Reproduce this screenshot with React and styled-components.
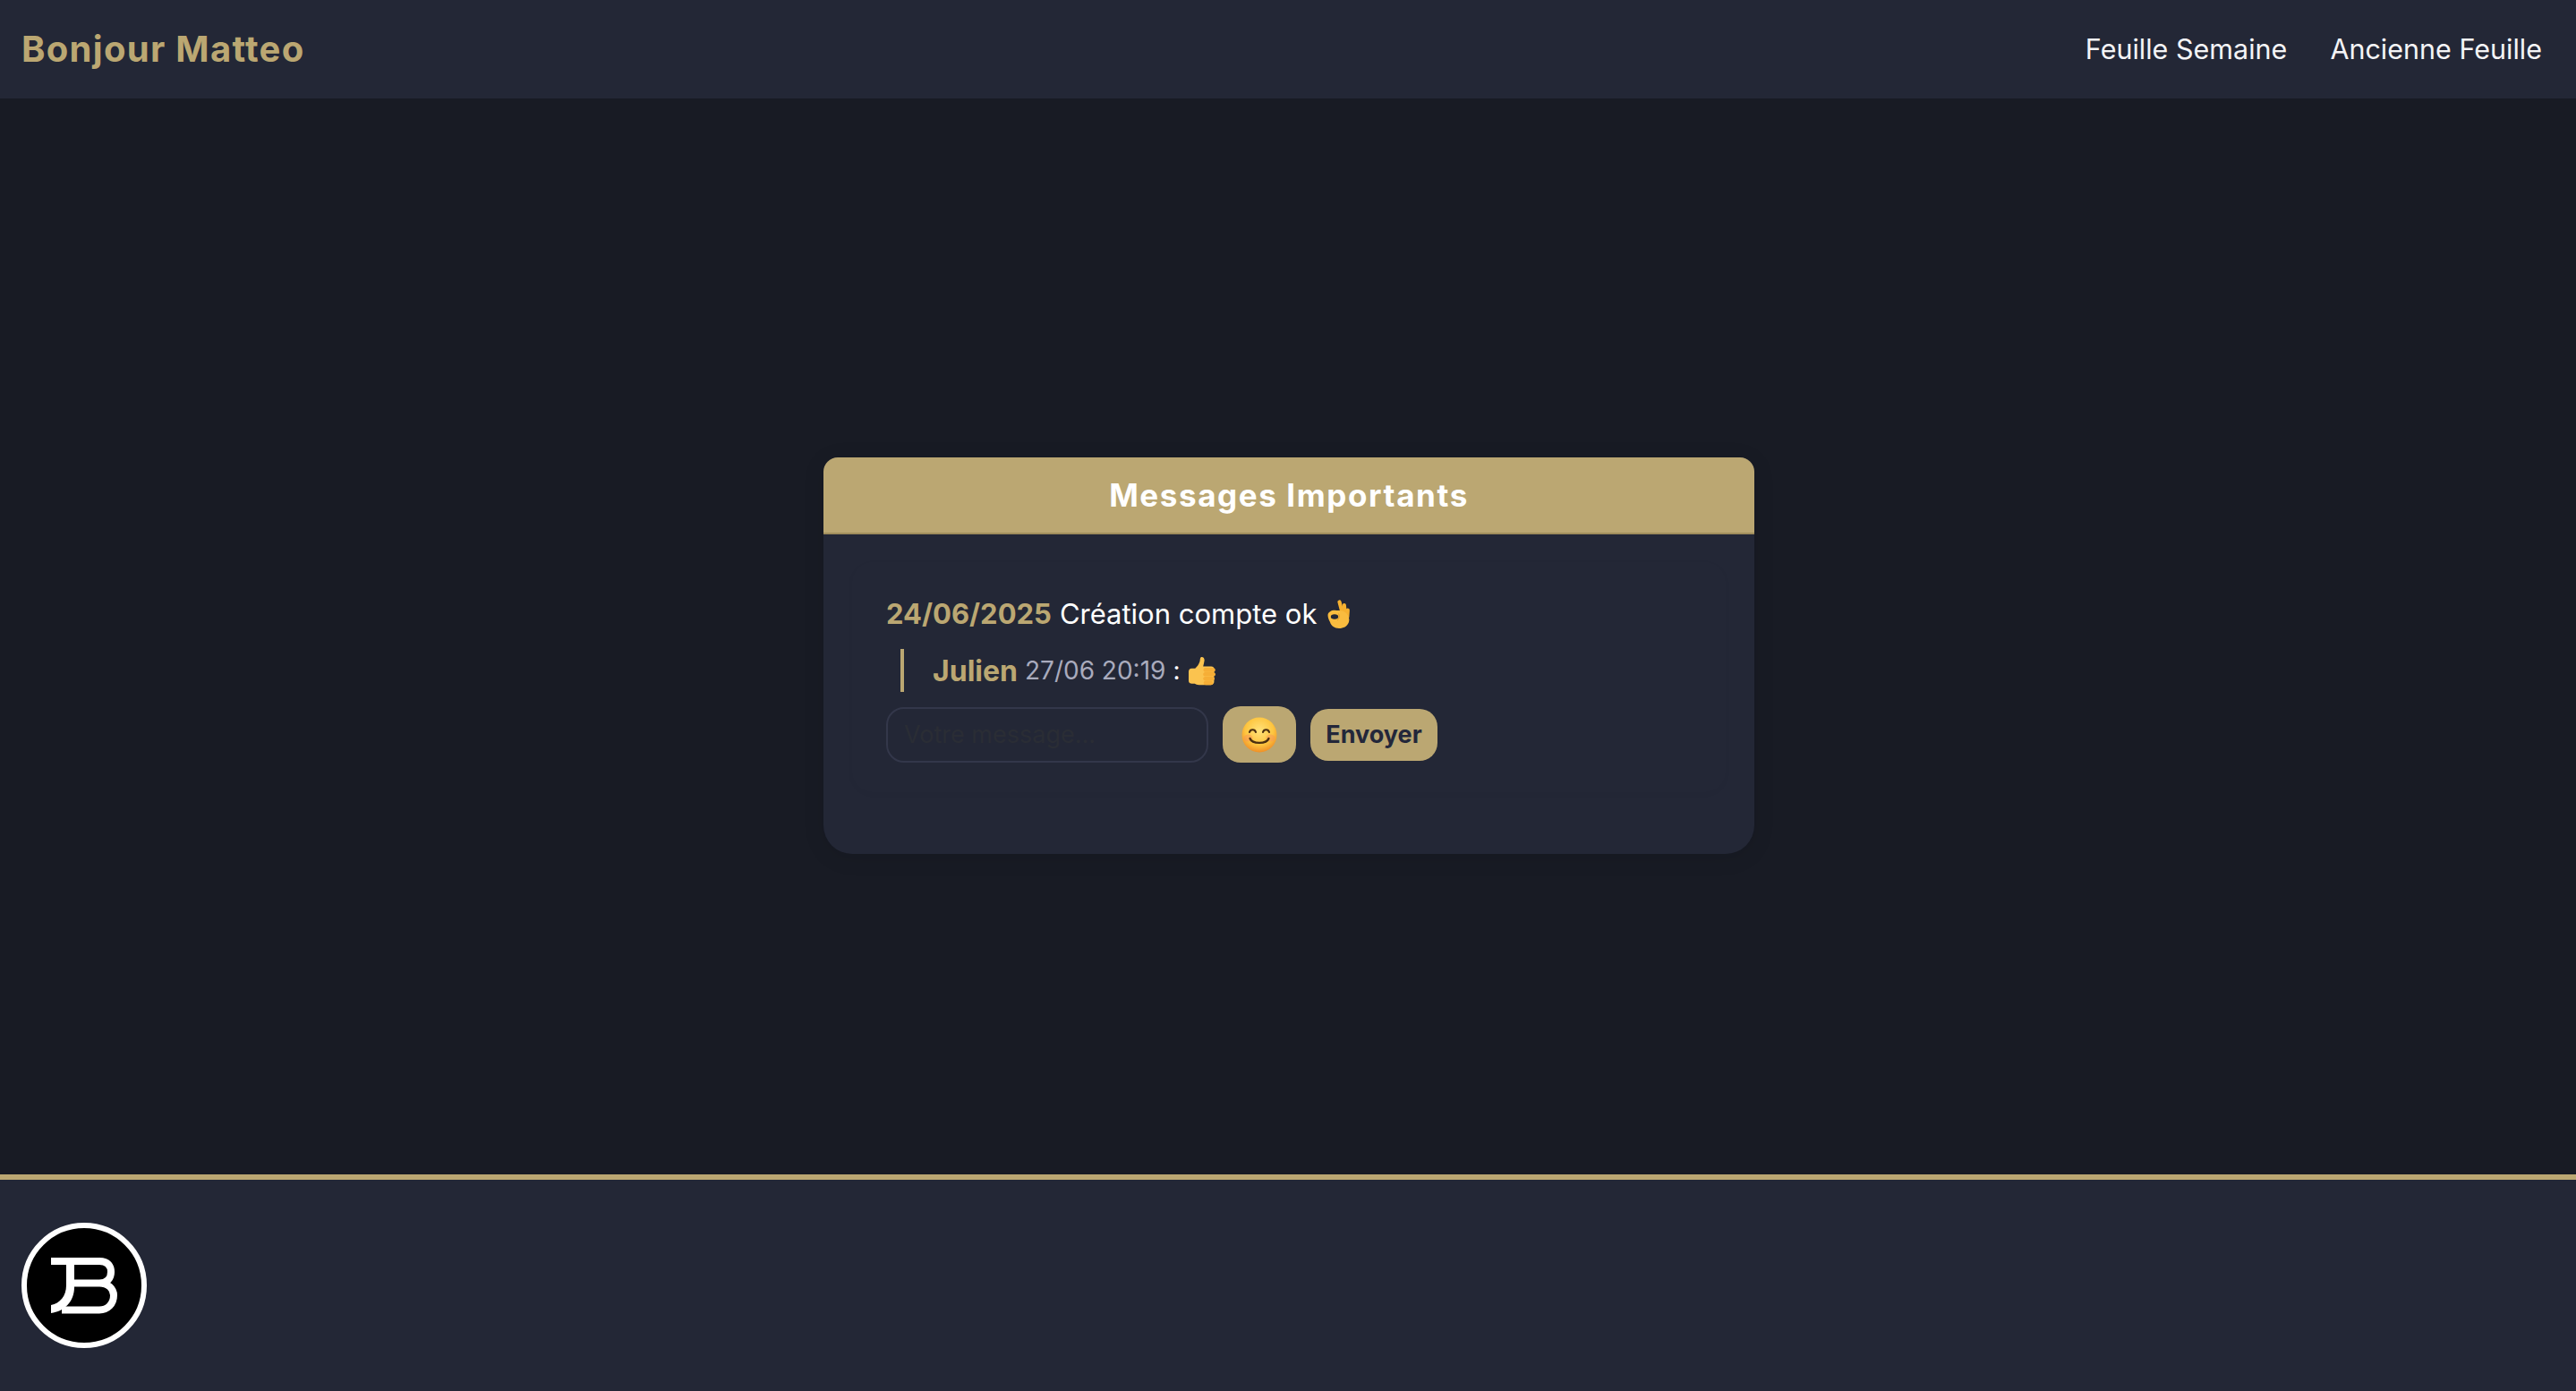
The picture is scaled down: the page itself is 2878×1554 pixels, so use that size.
import styled, { createGlobalStyle } from "styled-components";

const Global = createGlobalStyle`
  * { box-sizing: border-box; }
  html, body { margin: 0; padding: 0; }
  body {
    background: #181b24;
    font-family: Inter, "Noto Sans", sans-serif;
    color: #fff;
  }
`;

const OkEmoji = () => (
  <OkSvg viewBox="8 5 26 32" width="26" height="32">
    <g stroke="#f6b130" strokeWidth="4.200" strokeLinecap="round">
      <path d="M21.500 7.500L24.500 19" />
      <path d="M26.800 11L27.800 21" />
      <path d="M30.800 16.500L30.300 24" />
    </g>
    <path
      d="M8.500 22C9 18 14 16 18 17C22 17 26 17 29 20C32 23 33 27 32 30C30 35 26 37 21 37C16 37 12 34 11 30C9.500 27 8.500 25 8.500 22Z"
      fill="#f9bc3f"
    />
    <ellipse cx="16" cy="24" rx="4.200" ry="2.800" fill="#232736" />
    <path d="M20.500 20.500C22 23 21.500 26 19 28" stroke="#e09a2a" strokeWidth="1" fill="none" />
  </OkSvg>
);

const ThumbEmoji = () => (
  <EmojiSvg viewBox="0 0 32 33" width="32" height="33">
    <path
      d="M15 1c2.400-.6 3.800 1.400 3.600 4-.2 2.200-1 4.400-1.400 6.500h9c2 0 3.200 1.100 3.200 2.700v14.500c0 2.200-1.700 3.500-3.800 3.500H12.500c-2.200 0-3.400-.8-4.700-1.500H4.500C2 30.700 1 29.500 1 27v-9.500c0-2.400 1.200-3.800 3.500-3.800h3.800c2.300-2 4.300-4.700 5.200-8C13.800 3.900 13.800 1.400 15 1z"
      fill="#fbc34f"
    />
    <path
      d="M19.500 13h8.500c1.500 0 2.800 1 2.800 2.400s-1.300 2.400-2.800 2.400h-8c-1.400 0-2.500-1-2.500-2.400s.9-2.400 2-2.400zM19.500 18h9c1.400 0 2.500 1 2.500 2.300s-1.100 2.300-2.500 2.300h-9c-1.300 0-2.300-1-2.300-2.300s1-2.300 2.300-2.300zM19.500 23h8c1.400 0 2.500 1 2.500 2.200s-1.100 2.200-2.500 2.200h-8c-1.300 0-2.300-1-2.300-2.200s1-2.200 2.300-2.200zM20 27.800h6c1.300 0 2.300.9 2.300 2.200s-1 2.300-2.300 2.300h-6c-1.300 0-2.300-1-2.300-2.300s1-2.200 2.300-2.200z"
      fill="#f6ae36"
    />
  </EmojiSvg>
);

const SmileEmoji = () => (
  <EmojiSvg viewBox="0 0 40 40" width="40" height="40">
    <defs>
      <radialGradient id="smileFace" cx="50%" cy="38%" r="62%">
        <stop offset="0%" stopColor="#ffe27a" />
        <stop offset="65%" stopColor="#fdc53f" />
        <stop offset="100%" stopColor="#ef8f26" />
      </radialGradient>
    </defs>
    <circle cx="20" cy="20" r="19.500" fill="url(#smileFace)" />
    <ellipse cx="7.500" cy="23.500" rx="5" ry="4" fill="#f78f5b" opacity=".45" />
    <ellipse cx="32.500" cy="23.500" rx="5" ry="4" fill="#f78f5b" opacity=".45" />
    <path d="M9 17c1-3.600 6-3.600 7 0M24 17c1-3.600 6-3.600 7 0" stroke="#4a2f10" strokeWidth="2.100" fill="none" strokeLinecap="round" />
    <path d="M9.500 24c2.500 6.500 18.500 6.500 21 0" stroke="#4a2f10" strokeWidth="2.300" fill="none" strokeLinecap="round" />
  </EmojiSvg>
);

const Logo = () => (
  <LogoSvg viewBox="0 0 140 140" width="140" height="140">
    <circle cx="70" cy="70" r="67" fill="#000" stroke="#fff" strokeWidth="6" />
    <path d="M33 39H59V72C59 88 48 99 33 101V92C43 90 50 82 50 70V47H33Z" fill="#fff" />
    <path
      d="M59 43H87C97 43 100 49 100 55C100 62 96 67.500 87 67.500H59M87 67.500C97 67.500 103 74 103 81C103 91 96 97.500 87 97.500H45"
      stroke="#fff"
      strokeWidth="8"
      fill="none"
    />
  </LogoSvg>
);

const App = () => {
  return (
    <Page>
      <Global />
      <Header>
        <Hello>Bonjour Matteo</Hello>
        <Nav>
          <NavLink>Feuille Semaine</NavLink>
          <NavLink>Ancienne Feuille</NavLink>
        </Nav>
      </Header>
      <Main>
        <Card>
          <CardTitle>Messages Importants</CardTitle>
          <CardBody>
            <Message>
              <Line>
                <DateText>24/06/2025</DateText> Création compte ok <OkEmoji />
              </Line>
              <Reply>
                <Author>Julien</Author> <Time>27/06 20:19</Time> : <ThumbEmoji />
              </Reply>
              <ReplyForm>
                <ReplyInput placeholder="Votre message..." />
                <EmojiButton>
                  <SmileEmoji />
                </EmojiButton>
                <SendButton>Envoyer</SendButton>
              </ReplyForm>
            </Message>
          </CardBody>
        </Card>
      </Main>
      <Footer>
        <Logo />
      </Footer>
    </Page>
  );
};

const Page = styled.div`
  min-height: 1554px;
  display: grid;
  grid-template-rows: 110px 1202px 242px;
`;

const Header = styled.header`
  background: #232736;
  display: flex;
  align-items: center;
  justify-content: space-between;
  padding: 0 38px 2px 24px;
`;

const Hello = styled.div`
  color: #bba772;
  font-size: 40px;
  font-weight: 700;
  letter-spacing: 1.3px;
`;

const Nav = styled.nav`
  display: flex;
  gap: 48px;
`;

const NavLink = styled.a`
  color: #f4f4f6;
  font-size: 30.5px;
  font-weight: 400;
`;

const Main = styled.main`
  display: flex;
  justify-content: center;
  align-items: flex-start;
  padding: 401px 0 0 2px;
`;

const Card = styled.section`
  width: 1040px;
  height: 443px;
  background: #232736;
  border-radius: 16px 16px 32px 32px;
  overflow: hidden;
  box-shadow: 0 4px 24px rgba(0, 0, 0, 0.1);
`;

const CardTitle = styled.h2`
  margin: 0;
  height: 86px;
  background: #bba772;
  border-bottom: 2px solid #a08d5c;
  color: #fff;
  font-size: 35px;
  font-weight: 700;
  letter-spacing: 1.6px;
  display: flex;
  align-items: center;
  justify-content: center;
`;

const CardBody = styled.div`
  padding: 31px 32px;
`;

const Message = styled.article`
  height: 257px;
  padding: 38px 38px 0;
  border-radius: 24px;
  box-shadow: 0 2px 8px rgba(0, 0, 0, 0.025);
`;

const Line = styled.div`
  font-size: 31px;
  line-height: 40px;
  display: flex;
  align-items: center;
  gap: 9px;
`;

const DateText = styled.span`
  color: #bba772;
  font-weight: 700;
`;

const Reply = styled.div`
  margin: 19px 0 0 16px;
  height: 48px;
  padding-left: 32px;
  border-left: 4px solid #bba772;
  font-size: 28px;
  display: flex;
  align-items: center;
  gap: 8px;
`;

const Author = styled.span`
  color: #bba772;
  font-size: 32px;
  font-weight: 700;
`;

const Time = styled.span`
  color: #a9abbd;
`;

const ReplyForm = styled.div`
  margin-top: 16px;
  display: flex;
  align-items: center;
  gap: 16px;
`;

const ReplyInput = styled.input`
  width: 360px;
  height: 62px;
  padding: 0 18px;
  background: transparent;
  border: 2px solid #33374a;
  border-radius: 20px;
  font-family: inherit;
  font-size: 27px;
  &::placeholder {
    color: #2a2d35;
  }
`;

const EmojiButton = styled.button`
  width: 82px;
  height: 63px;
  padding: 0;
  border: 0;
  border-radius: 20px;
  background: #bba772;
  display: flex;
  align-items: center;
  justify-content: center;
`;

const SendButton = styled.button`
  width: 142px;
  height: 58px;
  padding: 0;
  border: 0;
  border-radius: 20px;
  background: #bba772;
  color: #23273a;
  font-family: inherit;
  font-size: 27px;
  font-weight: 700;
`;

const Footer = styled.footer`
  background: #232736;
  border-top: 6px solid #bba772;
  padding: 48px 24px;
`;

const EmojiSvg = styled.svg`
  display: block;
  flex: none;
`;

const OkSvg = styled(EmojiSvg)`
  margin-left: 3px;
`;

const LogoSvg = styled.svg`
  display: block;
`;

export default App;
